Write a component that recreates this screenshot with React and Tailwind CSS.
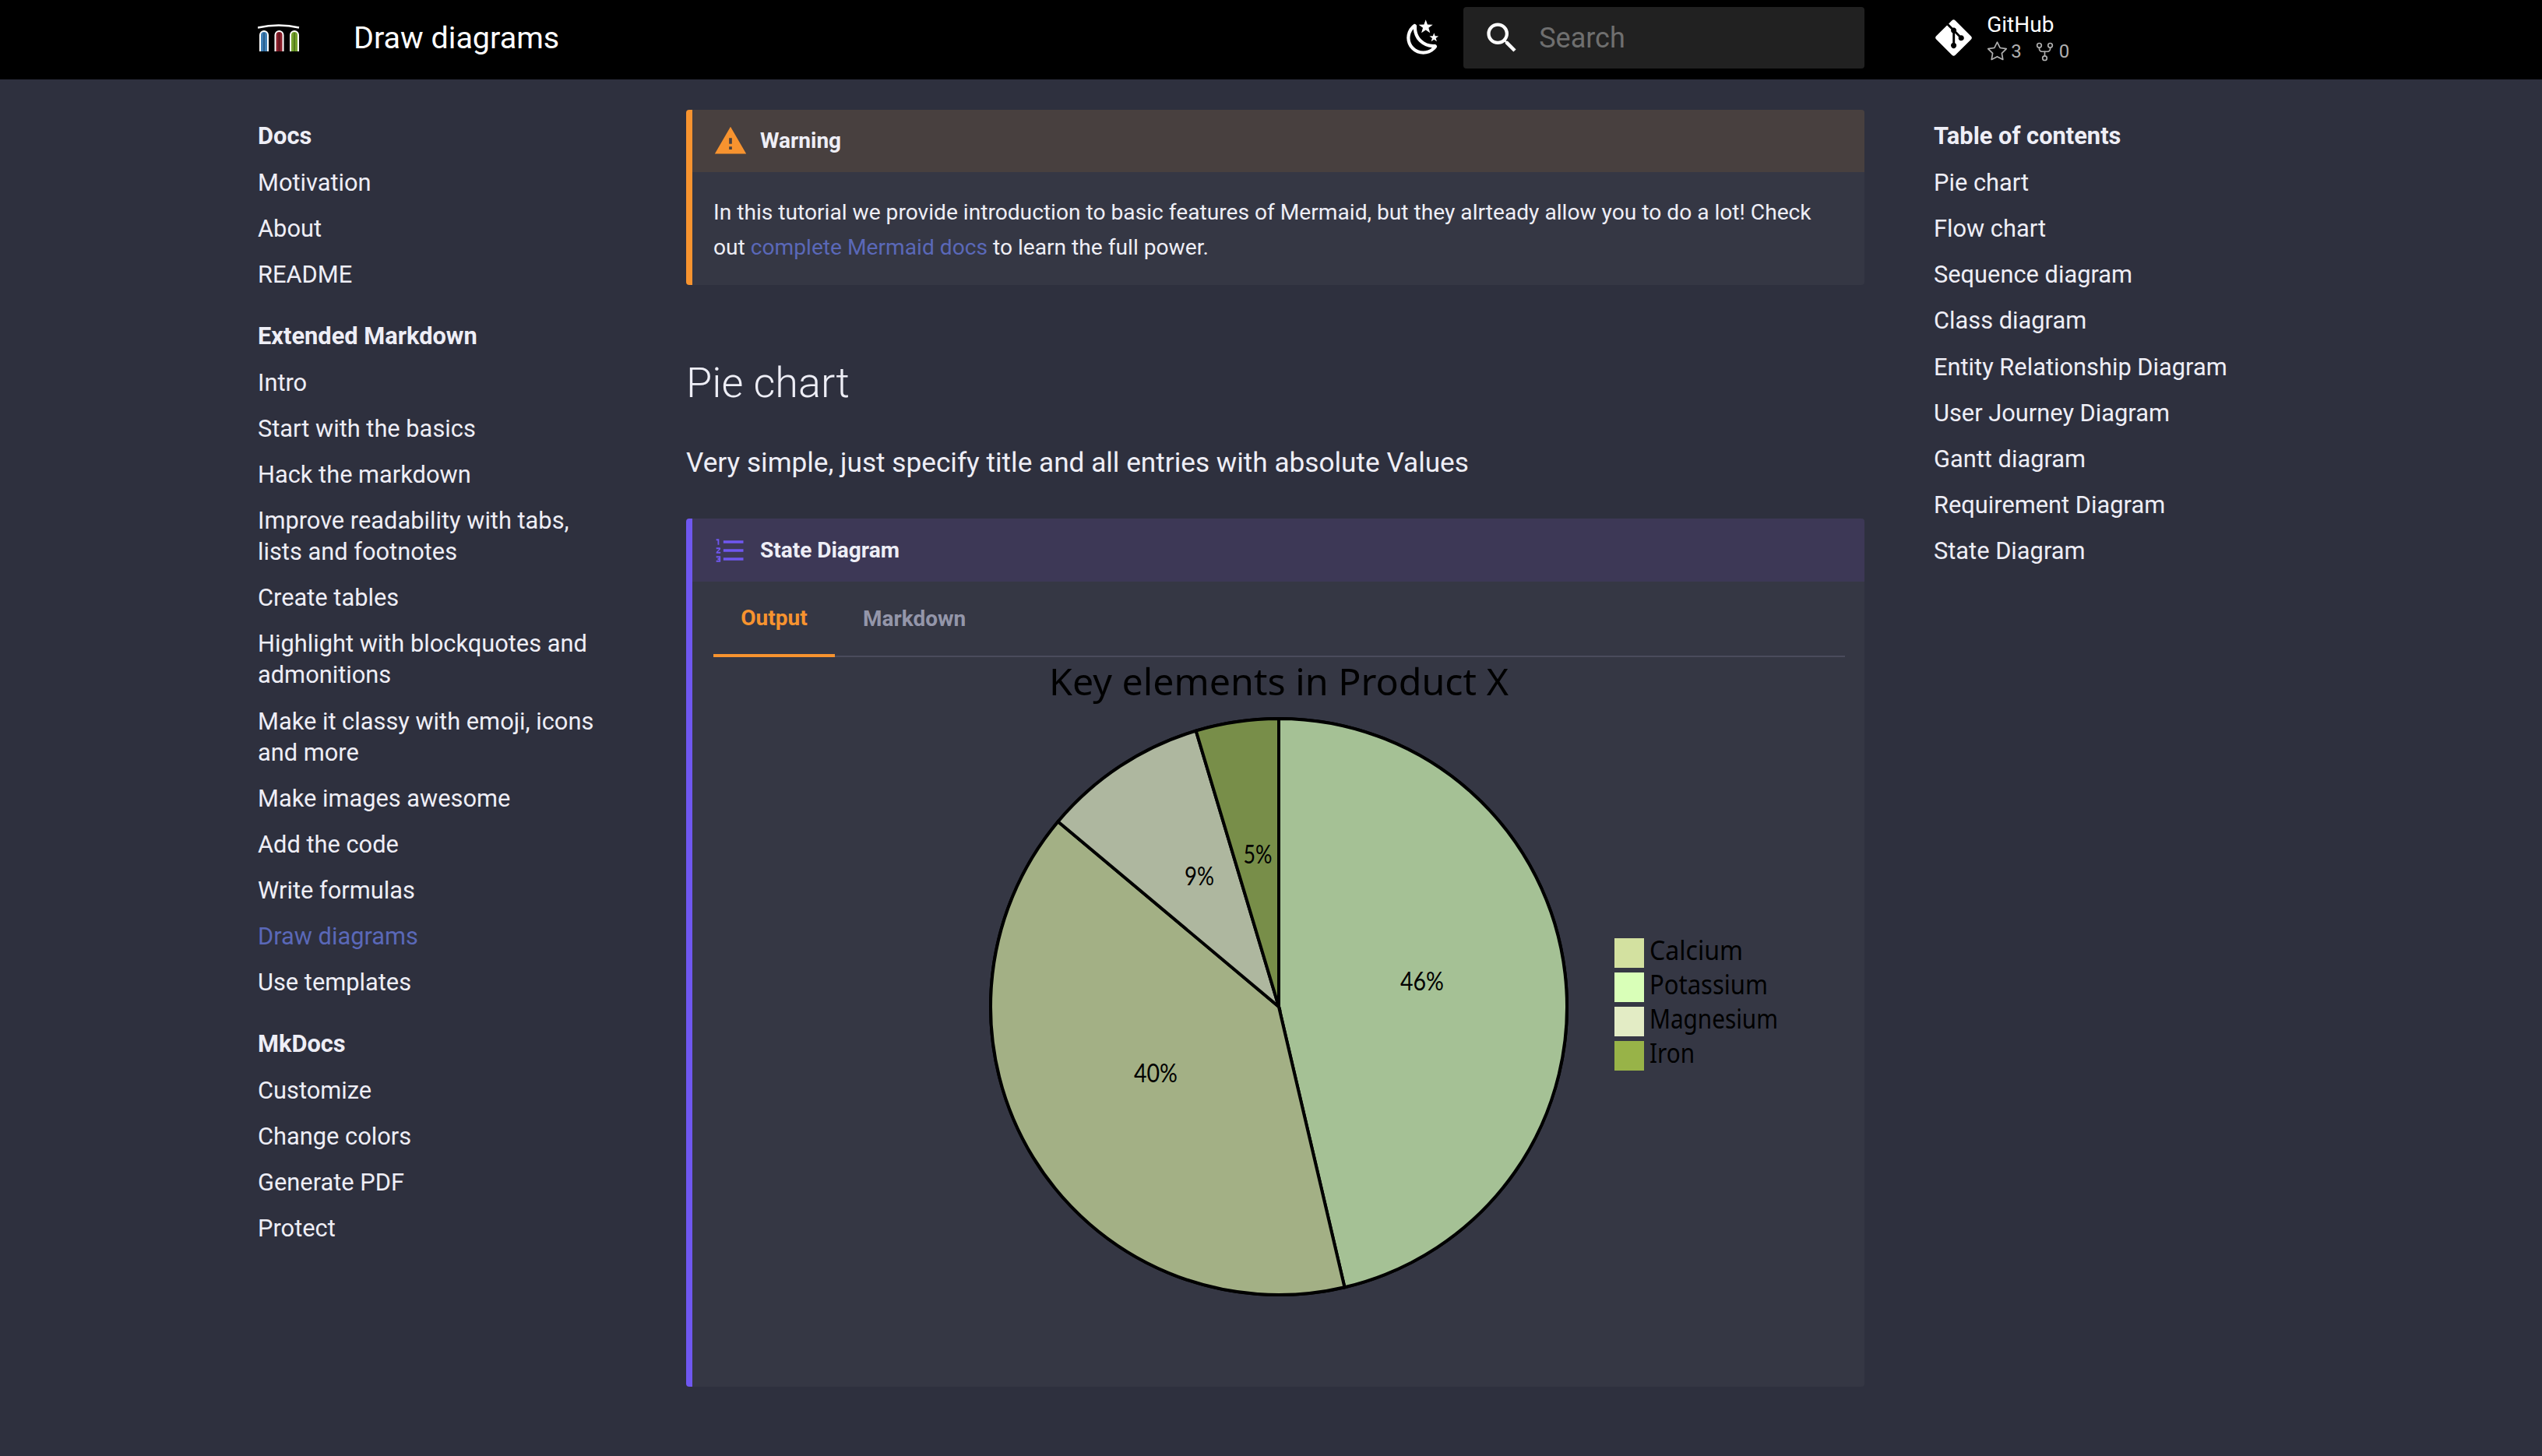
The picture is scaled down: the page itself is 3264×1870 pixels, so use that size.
import { FaGitAlt } from "react-icons/fa6"
import { GoStar, GoRepoForked } from "react-icons/go"

const navSections = [
  { title: "Docs", items: ["Motivation", "About", "README"] },
  {
    title: "Extended Markdown",
    items: [
      "Intro",
      "Start with the basics",
      "Hack the markdown",
      "Improve readability with tabs, lists and footnotes",
      "Create tables",
      "Highlight with blockquotes and admonitions",
      "Make it classy with emoji, icons and more",
      "Make images awesome",
      "Add the code",
      "Write formulas",
      "Draw diagrams",
      "Use templates",
    ],
  },
  { title: "MkDocs", items: ["Customize", "Change colors", "Generate PDF", "Protect"] },
]

const tocItems = [
  "Pie chart",
  "Flow chart",
  "Sequence diagram",
  "Class diagram",
  "Entity Relationship Diagram",
  "User Journey Diagram",
  "Gantt diagram",
  "Requirement Diagram",
  "State Diagram",
]

function Logo() {
  const arches = [
    { x: 2, fill: "#3f7fb5", dark: "#2b5f8c" },
    { x: 21.5, fill: "#8a1f2b", dark: "#5f141d" },
    { x: 41, fill: "#75a22e", dark: "#557a1e" },
  ]
  return (
    <svg width="54" height="36" viewBox="0 0 54 36" className="block">
      <path d="M0 4.5 C 18 0.5, 36 0.5, 53 4.5" fill="none" stroke="#fff" strokeWidth="2.4" />
      {arches.map(a => (
        <g key={a.x}>
          <path
            d={`M${a.x + 1} 35 V14 a5 5 0 0 1 10 0 V35`}
            fill={a.fill}
            stroke="#fff"
            strokeWidth="2"
          />
          <path d={`M${a.x + 6} 11 V35`} stroke={a.dark} strokeWidth="2" />
        </g>
      ))}
    </svg>
  )
}

function MoonIcon() {
  return (
    <svg width="51" height="51" viewBox="0 0 24 24" fill="#fff">
      <path d="M17.75,4.09L15.22,6.03L16.13,9.09L13.5,7.28L10.87,9.09L11.78,6.03L9.25,4.09L12.44,4L13.5,1L14.56,4L17.75,4.09M21.25,11L19.61,12.25L20.2,14.23L18.5,13.06L16.8,14.23L17.39,12.25L15.75,11L17.81,10.95L18.5,9L19.19,10.95L21.25,11M18.97,15.95C19.8,15.87 20.69,17.05 20.16,17.8C19.84,18.25 19.5,18.67 19.08,19.07C15.17,23 8.84,23 4.94,19.07C1.03,15.17 1.03,8.83 4.94,4.93C5.34,4.53 5.76,4.17 6.21,3.85C6.96,3.32 8.14,4.21 8.06,5.04C7.79,7.9 8.75,10.87 10.95,13.06C13.14,15.26 16.1,16.22 18.97,15.95M17.33,17.97C14.5,17.81 11.7,16.64 9.53,14.5C7.36,12.31 6.2,9.5 6.04,6.68C3.23,9.82 3.34,14.64 6.35,17.66C9.37,20.67 14.19,20.78 17.33,17.97Z" />
    </svg>
  )
}

function SearchIcon() {
  return (
    <svg width="51" height="51" viewBox="0 0 24 24" fill="#fff">
      <path d="M9.5,3A6.5,6.5 0 0,1 16,9.5C16,11.11 15.41,12.59 14.44,13.73L14.71,14H15.5L20.5,19L19,20.5L14,15.5V14.71L13.73,14.44C12.59,15.41 11.11,16 9.5,16A6.5,6.5 0 0,1 3,9.5A6.5,6.5 0 0,1 9.5,3M9.5,5C7,5 5,7 5,9.5C5,12 7,14 9.5,14C12,14 14,12 14,9.5C14,7 12,5 9.5,5Z" />
    </svg>
  )
}

function Header() {
  return (
    <header className="flex h-[102px] items-center bg-black pb-[5px] pl-[331px] text-white">
      <Logo />
      <span className="ml-[69px] text-[39.5px] leading-none">Draw diagrams</span>
      <div className="ml-[1084px]">
        <MoonIcon />
      </div>
      <div className="ml-[26px] flex h-[79px] w-[515px] items-center rounded bg-[#212121] pl-[24px]">
        <SearchIcon />
        <span className="ml-[22px] text-[36px] text-[#6f6f6f]">Search</span>
      </div>
      <div className="ml-[88px] flex items-center">
        <FaGitAlt className="h-[53px] w-[53px]" />
        <div className="ml-[16px]">
          <div className="text-[28px] leading-[32px]">GitHub</div>
          <div className="mt-[3px] flex items-center text-[24px] leading-[30px] text-[#b0b0b0]">
            <GoStar className="h-[27px] w-[27px]" />
            <span className="ml-[4px]">3</span>
            <GoRepoForked className="ml-[16px] h-[27px] w-[27px]" />
            <span className="ml-[5px]">0</span>
          </div>
        </div>
      </div>
    </header>
  )
}

function NavList({ title, items, active }) {
  return (
    <div>
      <div className="text-[30.8px] leading-[40.04px] font-bold text-[#eeeef6]">{title}</div>
      <div className="mt-[20px] flex flex-col gap-[19.1px]">
        {items.map(item => (
          <div
            key={item}
            className={`text-[30.8px] leading-[40.04px] ${item === active ? "text-[#5a68b8]" : "text-[#eeeef6]"}`}
          >
            {item}
          </div>
        ))}
      </div>
    </div>
  )
}

function polar(deg, r = 370) {
  const a = (deg * Math.PI) / 180
  return [726 + r * Math.sin(a), 449 + -r * Math.cos(a)]
}

function Slice({ from, to, fill }) {
  const [x1, y1] = polar(from)
  const [x2, y2] = polar(to)
  const large = to - from > 180 ? 1 : 0
  return (
    <path
      d={`M726 449 L${x1} ${y1} A370 370 0 ${large} 1 ${x2} ${y2} Z`}
      fill={fill}
      stroke="#000"
      strokeWidth="4"
    />
  )
}

function PieChart() {
  const legend = [
    { label: "Calcium", color: "#d3e1a0", w: 120 },
    { label: "Potassium", color: "#d9ffb8", w: 152 },
    { label: "Magnesium", color: "#e3ecc5", w: 165 },
    { label: "Iron", color: "#98b348", w: 58 },
  ]
  const labels = [
    { text: "46%", x: 910, y: 428, w: 56 },
    { text: "40%", x: 568, y: 546, w: 56 },
    { text: "9%", x: 624, y: 293, w: 38 },
    { text: "5%", x: 699, y: 265, w: 37 },
  ]
  return (
    <svg width="1452" height="945" viewBox="0 -8 1452 945" className="-mt-[8px] block">
      <text
        x="726"
        y="49"
        textAnchor="middle"
        fontFamily="'Noto Sans', sans-serif"
        fontSize="48"
        textLength="590"
        lengthAdjust="spacingAndGlyphs"
        fill="#000"
      >
        Key elements in Product X
      </text>
      <circle cx="726" cy="449" r="370" fill="none" stroke="#000" strokeWidth="4" />
      <Slice from={0} to={166.8} fill="#a5c195" />
      <Slice from={166.8} to={310} fill="#a3b085" />
      <Slice from={310} to={343.3} fill="#aeb79f" />
      <Slice from={343.3} to={360} fill="#788e49" />
      {labels.map(l => (
        <text
          key={l.text}
          x={l.x}
          y={l.y}
          textAnchor="middle"
          fontFamily="Lato, sans-serif"
          fontSize="32"
          textLength={l.w}
          lengthAdjust="spacingAndGlyphs"
          fill="#000"
        >
          {l.text}
        </text>
      ))}
      {legend.map((l, i) => (
        <g key={l.label}>
          <rect x="1157" y={361 + i * 44} width="38" height="38" fill={l.color} />
          <text
            x="1202"
            y={389 + i * 44}
            fontFamily="'Noto Sans', sans-serif"
            fontSize="34"
            textLength={l.w}
            lengthAdjust="spacingAndGlyphs"
            fill="#000"
          >
            {l.label}
          </text>
        </g>
      ))}
    </svg>
  )
}

function Admonition({ color, headClass, icon, title, children, className }) {
  return (
    <div className={`overflow-hidden rounded border-l-8 bg-[#353744] ${color} ${className}`}>
      <div className={`flex items-center pl-[27px] text-[28px] font-bold text-[#eeeef6] ${headClass}`}>
        <div className="w-[60px]">{icon}</div>
        {title}
      </div>
      {children}
    </div>
  )
}

export default function App() {
  return (
    <div className="min-h-screen bg-[#2e303e] font-[Roboto] text-[#eeeef6]">
      <Header />
      <main className="flex pl-[331px]">
        <aside className="w-[550px] shrink-0 pt-[53px] pr-[90px]">
          <div className="flex flex-col gap-[38.2px]">
            {navSections.map(s => (
              <NavList key={s.title} title={s.title} items={s.items} active="Draw diagrams" />
            ))}
          </div>
        </aside>

        <section className="w-[1513px] shrink-0 pt-[39px]">
          <Admonition
            color="border-[#f7932f]"
            headClass="h-[80px] bg-[#48403f]"
            title="Warning"
            icon={
              <svg width="44" height="44" viewBox="0 0 24 24" fill="#f7932f">
                <path d="M13 14H11V10H13M13 18H11V16H13M1 21H23L12 2L1 21Z" />
              </svg>
            }
          >
            <p className="px-[27px] pt-[29px] pb-[26px] text-[28.16px] leading-[45px]">
              In this tutorial we provide introduction to basic features of Mermaid, but they alrteady allow you to do a lot! Check out{" "}
              <a className="text-[#5a68b8]">complete Mermaid docs</a> to learn the full power.
            </p>
          </Admonition>

          <h2 className="mt-[93px] text-[54px] leading-[66px] font-light">Pie chart</h2>
          <p className="mt-[42px] text-[35.2px] leading-[54px]">
            Very simple, just specify title and all entries with absolute Values
          </p>

          <Admonition
            className="mt-[45px]"
            color="border-[#6f57f0]"
            headClass="h-[81px] bg-[#3d3856]"
            title="State Diagram"
            icon={
              <svg width="44" height="44" viewBox="0 0 24 24" fill="#6f57f0">
                <path d="M7,13V11H21V13H7M7,19V17H21V19H7M7,7V5H21V7H7M3,8V5H2V4H4V8H3M2,17V16H5V20H2V19H4V18.5H3V17.5H4V17H2M4.25,10A0.75,0.75 0 0,1 5,10.75C5,10.95 4.92,11.14 4.79,11.27L3.12,13H5V14H2V13.08L4,11H2V10H4.25Z" />
              </svg>
            }
          >
            <div className="pr-[25px] pl-[27px]">
              <div className="flex h-[97px] border-b-2 border-[#4a4b5c] text-[28px] font-bold">
                <div className="-mb-[2px] flex w-[156px] items-center justify-center border-b-4 border-[#f7932f] text-[#f7932f]">
                  Output
                </div>
                <div className="ml-[36px] flex items-center text-[#9496aa]">Markdown</div>
              </div>
              <PieChart />
            </div>
          </Admonition>
        </section>

        <aside className="ml-[89px] pt-[53px]">
          <NavList title="Table of contents" items={tocItems} />
        </aside>
      </main>
    </div>
  )
}
